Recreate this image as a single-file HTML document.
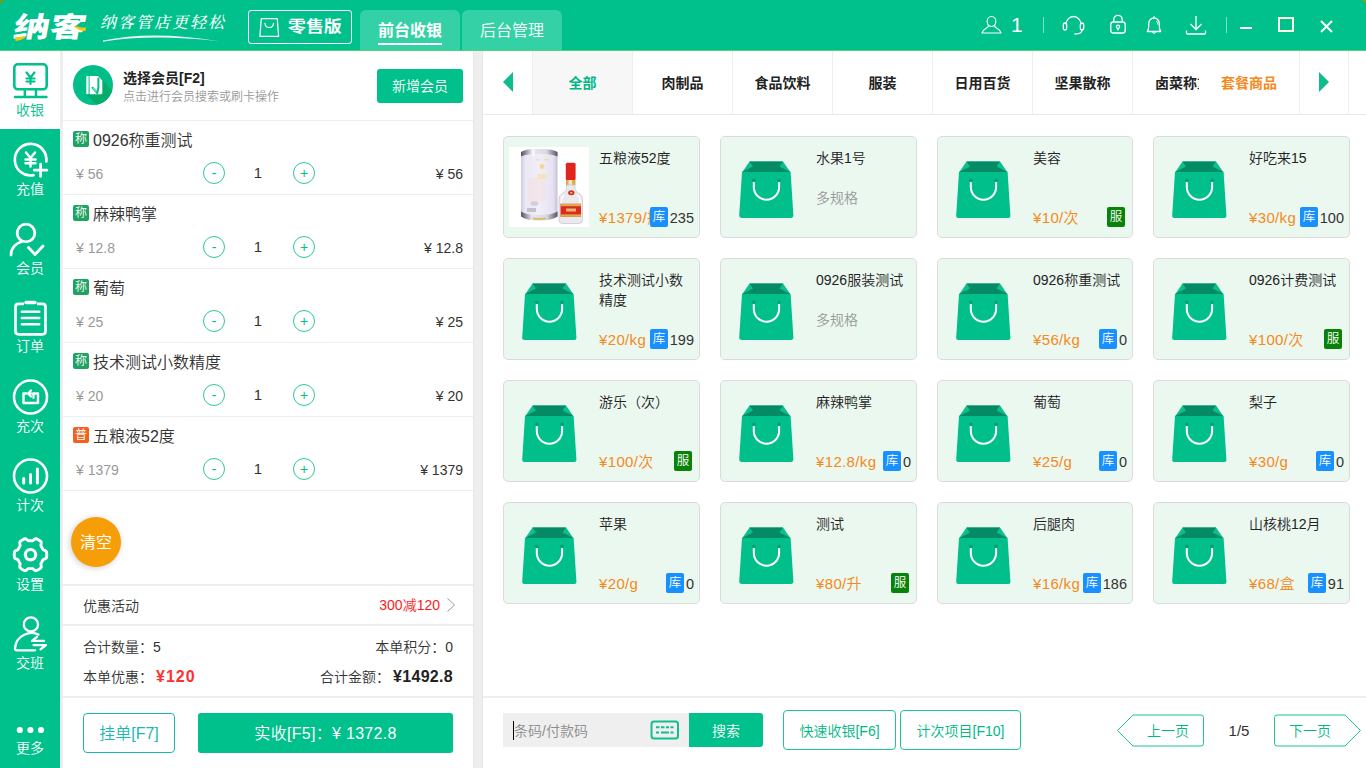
<!DOCTYPE html>
<html lang="zh-CN">
<head>
<meta charset="utf-8">
<title>纳客收银</title>
<style>
*{box-sizing:border-box;margin:0;padding:0}
html,body{width:1366px;height:768px;overflow:hidden;background:#eee}
body{font-family:"Liberation Sans","Noto Sans CJK SC",sans-serif;color:#333;position:relative;font-size:14px;font-weight:350}
.abs{position:absolute}
/* header */
#hdr{position:absolute;left:0;top:0;width:1366px;height:50px;background:#00c08b}
#hline{position:absolute;left:0;top:50px;width:1366px;height:1px;background:#4cd675}
.tab{position:absolute;top:10px;height:40px;width:100px;background:#33d1a5;border-radius:6px 6px 0 0;color:#fff;font-size:16px;text-align:center;line-height:41px}
#edition{position:absolute;left:248px;top:10px;width:104px;height:34px;border:1px solid #fff;border-radius:3px;color:#fff;font-weight:bold;font-size:16px;line-height:31px;padding-left:39px}
/* sidebar */
#side{position:absolute;left:0;top:51px;width:60px;height:717px;background:#00c08b}
.sitem{position:absolute;left:0;width:60px;height:79px;color:#fff;font-size:14px;text-align:center}
.sitem span{position:absolute;left:0;width:60px;top:49px;line-height:18px}
.sitem svg{position:absolute;left:0;top:0}
.sitem.on{background:#fff;color:#00c08b;height:78px}
/* left panel */
#lp{position:absolute;left:63px;top:51px;width:410px;height:717px;background:#fff}
.hl{position:absolute;left:0;width:410px;background:#eee}
.row{position:absolute;left:0;width:410px;height:74px;border-bottom:1px solid #eee}
.bdg{position:absolute;left:10px;top:10px;width:16px;height:16px;border-radius:2px;background:#1fa363;color:#fff;font-size:12px;line-height:16px;text-align:center}
.bdg.p{background:#f4601e}
.nm{position:absolute;left:30px;top:8px;font-size:16px;line-height:24px;color:#333;white-space:nowrap}
.pr{position:absolute;left:13px;top:42px;font-size:14px;line-height:22px;color:#999;white-space:nowrap}
.tt{position:absolute;right:10px;top:42px;font-size:14px;line-height:22px;color:#333;white-space:nowrap}
.cb{position:absolute;top:41px;width:22px;height:22px;border:1px solid #2cc99a;border-radius:50%;color:#00c08b;font-size:14px;line-height:21px;text-align:center}
.qty{position:absolute;left:185px;width:20px;top:41px;font-size:15px;line-height:22px;text-align:center;color:#333}
/* right panel */
#rp{position:absolute;left:483px;top:51px;width:883px;height:717px;background:#fff}
.cat{position:absolute;top:0;height:63px;width:100px;border-left:1px solid #eee;font-size:14px;font-weight:bold;color:#222;text-align:center;line-height:65px;white-space:nowrap;overflow:hidden}
.card{position:absolute;width:197px;height:102px;background:#ebf8ef;border:1px solid #dbdbdb;border-radius:5px}
.card .t{position:absolute;left:95px;top:11px;width:92px;font-size:14px;line-height:20px;color:#222}
.card .p{position:absolute;left:95px;top:71px;font-size:15px;line-height:20px;color:#f5891b;white-space:nowrap;letter-spacing:.35px}
.card .m{position:absolute;left:95px;top:51px;font-size:14px;line-height:20px;color:#999}
.card .k{position:absolute;top:70px;width:18px;height:20px;border-radius:2px;background:#1890ff;color:#fff;font-size:12.500px;line-height:21px;text-align:center}
.card .k.f{background:#088208;left:169px;width:18px}
.card .n{position:absolute;top:71px;font-size:14.500px;line-height:20px;color:#333;white-space:nowrap}
.card svg.bag{position:absolute;left:16.800px;top:23.600px}
.gbtn{position:absolute;border:1px solid #1fc495;border-radius:4px;color:#00b886;font-size:14px;text-align:center;background:#fff;white-space:nowrap}
</style>
</head>
<body>
<div id="hdr">
<div class="abs" id="logo" style="left:14px;top:8px;font-size:28px;line-height:40px;font-weight:900;color:#fff;letter-spacing:0;transform-origin:0 50%;transform:scaleX(1.29) skewX(-8deg);white-space:nowrap">纳客</div>
<svg class="abs" style="left:12px;top:8px" width="80" height="36" viewBox="0 0 80 36"><path d="M3.200 28.800Q8 29.500 13.500 27.800L13 30Q8 33 3.500 32.900Z" fill="#f9c40f"/><path d="M61.800 18Q66 18 69 19.500L73.900 19.500L73.500 23Q67 23.500 61.800 18Z" fill="#f9c40f"/></svg>
<div class="abs" id="slogan" style="left:100px;top:11px;font-size:16px;line-height:24px;color:#fff;font-style:italic;font-weight:500;letter-spacing:2px;white-space:nowrap;font-family:'Liberation Serif','Noto Serif CJK SC',serif">纳客管店更轻松</div>
<svg class="abs" style="left:100px;top:33px" width="125" height="10" viewBox="0 0 125 10"><path d="M3 7.600Q52 -3 119 8.300Q52 .6 3 8.700Z" fill="#fff" opacity=".92"/></svg>
<div id="edition"><span style="display:inline-block;transform-origin:0 50%;transform:scaleX(1.12)">零售版</span></div>
<svg class="abs" style="left:258px;top:15.500px" width="22.500" height="23" viewBox="0 0 24 24" fill="none" stroke="#fff" stroke-width="1.3"><path d="M3.5 2.5h17l1.5 19h-20z" stroke-linejoin="round"/><path d="M7.5 7.5c0 6 9 6 9 0" stroke-linecap="round"/></svg>
<div class="tab" style="left:360px;font-weight:bold">前台收银<i style="position:absolute;left:18px;top:33px;width:64px;height:2px;background:#fff"></i></div>
<div class="tab" style="left:462px">后台管理</div>
<!-- right icons -->
<svg class="abs" style="left:980px;top:14px" width="24" height="22" viewBox="0 0 24 22" fill="none" stroke="#fff" stroke-width="1.2"><ellipse cx="11.5" cy="7.5" rx="4.3" ry="5"/><path d="M8.6 11.5c-.3 3-6.2 3.200-6.600 7.500h19c-.4-4.300-6.300-4.500-6.600-7.500" stroke-linejoin="round"/></svg>
<div class="abs" style="left:1011px;top:12px;font-size:21px;line-height:26px;color:#fff">1</div>
<i class="abs" style="left:1043px;top:17px;width:1px;height:16px;background:#7fe0c4"></i>
<svg class="abs" style="left:1061px;top:13px" width="25" height="24" viewBox="0 0 25 24" fill="none" stroke="#fff" stroke-width="1.3"><path d="M5 11.500a7.500 8 0 0 1 15 0"/><rect x="2.300" y="10" width="3.400" height="7" rx="1.700"/><rect x="19.300" y="10" width="3.400" height="7" rx="1.700"/><path d="M21 17c0 3-3 4-7 4" stroke-linecap="round"/></svg>
<svg class="abs" style="left:1108px;top:13px" width="20" height="22" viewBox="0 0 20 22" fill="none" stroke="#fff" stroke-width="1.3"><rect x="2.800" y="9" width="14.400" height="11" rx="2.500"/><path d="M5.800 9v-2.500a4.200 4.200 0 0 1 8.400 0v2.500"/><circle cx="10" cy="13.800" r="1.600"/><path d="M10 15.400v2"/></svg>
<svg class="abs" style="left:1143px;top:13px" width="22" height="24" viewBox="0 0 22 24" fill="none" stroke="#fff" stroke-width="1.300"><path d="M4.300 18.500c1.200-1.500 1.500-3 1.500-8.300a5.200 5.200 0 0 1 10.400 0c0 5.300 .3 6.800 1.500 8.300z" stroke-linejoin="round"/><path d="M9.300 19a1.800 1.800 0 0 0 3.400 0M11 3v2M13.500 8q1.200 1.500 1.200 3.500" stroke-width="1"/></svg>
<svg class="abs" style="left:1185px;top:14px" width="22" height="22" viewBox="0 0 22 22" fill="none" stroke="#fff" stroke-width="1.300"><path d="M11 2v13M5.500 10l5.500 5.500 5.500-5.500" /><path d="M1.500 16.500v2.500q0 1 1 1h17q1 0 1-1v-2.500"/></svg>
<i class="abs" style="left:1226px;top:17px;width:1px;height:16px;background:#7fe0c4"></i>
<i class="abs" style="left:1240px;top:27px;width:12px;height:2px;background:#fff"></i>
<i class="abs" style="left:1278px;top:17px;width:16px;height:15px;border:2px solid #ffffe6"></i>
<svg class="abs" style="left:1319px;top:19px" width="15" height="15" viewBox="0 0 15 15" stroke="#fff" stroke-width="2"><path d="M2 2l11 11M13 2l-11 11"/></svg>
</div>
<div id="hline"></div><svg class="abs" style="left:0;top:0;z-index:5" width="4" height="4" viewBox="0 0 4 4"><path d="M0 0h4v1h-2v1h-1v2h-1z" fill="#7a9a00"/></svg><svg class="abs" style="left:1362px;top:0;z-index:5" width="4" height="4" viewBox="0 0 4 4"><path d="M0 0h4v4h-1v-2h-1v-1h-2z" fill="#86a010"/></svg>
<i class="abs" style="left:473px;top:51px;width:1px;height:717px;background:#e6e6e6"></i><i class="abs" style="left:482px;top:51px;width:1px;height:717px;background:#e6e6e6"></i>
<div id="side">
<div class="sitem on" style="top:0"><svg width="60" height="50" viewBox="0 0 60 50" fill="none" stroke="#00c08b" stroke-width="2.600"><rect x="14.300" y="13.300" width="32.400" height="25" rx="3.500"/><path d="M24.800 38.500v7M36 38.500v7" stroke-width="2.400"/><path d="M15 46h31.500" stroke-width="2.400" stroke-linecap="round"/><path d="M26.500 21.500l4 5 4-5M30.500 26.500v6.500M26.500 27.500h8M26.500 30.500h8" stroke-width="2.200" stroke-linecap="round" stroke-linejoin="round"/></svg><span style="top:50px">收银</span></div>
<div class="sitem" style="top:79px"><svg width="60" height="50" viewBox="0 0 60 50" fill="none" stroke="#fff" stroke-width="2.700"><path d="M46.300 31.500A15.800 15.800 0 1 0 33.500 45.200" stroke-linecap="round"/><path d="M40.600 34v12.500M34.300 40.200h12.600" stroke-linecap="round"/><path d="M26 22.500l4.500 5.500 4.500-5.500M30.500 28v8.500M25.500 29.500h10M25.500 33.200h10" stroke-width="2.500" stroke-linecap="round" stroke-linejoin="round"/></svg><span style="top:50px">充值</span></div>
<div class="sitem" style="top:158px"><svg width="60" height="50" viewBox="0 0 60 50" fill="none" stroke="#fff" stroke-width="2.800"><circle cx="26" cy="24" r="8.800"/><path d="M11 46c0-7 5-12 11-13.500" stroke-linecap="round"/><path d="M28.500 38.500l6.500 7 8-8.500" stroke-linecap="round" stroke-linejoin="round"/></svg><span style="top:50px">会员</span></div>
<div class="sitem" style="top:237px"><svg width="60" height="50" viewBox="0 0 60 50" fill="none" stroke="#fff" stroke-width="2.700"><path d="M24 15.800h-5.500q-3 0-3 3v24.500q0 3 3 3h24q3 0 3-3v-24.500q0-3-3-3h-5.500"/><path d="M26 14.500h9" stroke-width="3.400" stroke-linecap="round"/><path d="M21.800 23.800h17.500M21.800 30h17.500M21.800 36.300h17.500" stroke-width="2.400" stroke-linecap="round"/></svg><span style="top:49px">订单</span></div>
<div class="sitem" style="top:316px"><svg style="top:1px" width="60" height="50" viewBox="0 0 60 50" fill="none" stroke="#fff" stroke-width="2.600"><circle cx="30.500" cy="29" r="16.500"/><path d="M27 25.500h-3.500v9.500h14.500v-9.500h-4.500" stroke-linejoin="round" stroke-width="2.400"/><path d="M33.500 30v-4.500h-5M31 22.500l-3 3 3 3" stroke-width="2.200" stroke-linejoin="round" stroke-linecap="round"/></svg><span style="top:50px">充次</span></div>
<div class="sitem" style="top:395px"><svg style="top:1px" width="60" height="50" viewBox="0 0 60 50" fill="none" stroke="#fff" stroke-width="2.600"><circle cx="30.500" cy="29" r="16.500"/><path d="M23.700 36v-4.500M30.500 36v-8.500M37.400 36v-14" stroke-width="3" stroke-linecap="round"/></svg><span style="top:50px">计次</span></div>
<div class="sitem" style="top:474px"><svg width="60" height="50" viewBox="0 0 60 50" fill="none" stroke="#fff" stroke-width="2.900"><circle cx="30.500" cy="29.700" r="5.200" stroke-width="3.200"/><path d="M46.75 29.70 L46.74 30.30 L46.71 30.89 L46.66 31.48 L46.59 32.07 L46.49 32.66 L46.13 33.19 L45.49 33.62 L44.69 33.97 L43.90 34.27 L43.27 34.58 L42.86 34.94 L42.65 35.38 L42.45 35.82 L42.24 36.26 L42.02 36.68 L41.78 37.10 L41.53 37.51 L41.26 37.91 L41.01 38.32 L40.91 38.87 L40.97 39.60 L41.12 40.47 L41.23 41.37 L41.20 42.17 L40.94 42.76 L40.50 43.15 L40.05 43.50 L39.59 43.85 L39.11 44.17 L38.62 44.48 L38.13 44.77 L37.62 45.04 L37.11 45.29 L36.59 45.52 L36.05 45.72 L35.44 45.66 L34.76 45.29 L34.07 44.74 L33.43 44.17 L32.86 43.75 L32.36 43.56 L31.89 43.59 L31.43 43.63 L30.96 43.66 L30.50 43.66 L30.04 43.66 L29.57 43.63 L29.11 43.59 L28.64 43.56 L28.14 43.75 L27.57 44.17 L26.93 44.74 L26.24 45.29 L25.56 45.66 L24.95 45.72 L24.41 45.52 L23.89 45.29 L23.38 45.04 L22.87 44.77 L22.38 44.48 L21.89 44.17 L21.41 43.85 L20.95 43.50 L20.50 43.15 L20.06 42.76 L19.80 42.17 L19.77 41.37 L19.88 40.47 L20.03 39.60 L20.09 38.87 L19.99 38.32 L19.74 37.91 L19.47 37.51 L19.22 37.10 L18.98 36.68 L18.76 36.26 L18.55 35.82 L18.35 35.38 L18.14 34.94 L17.73 34.58 L17.10 34.27 L16.31 33.97 L15.51 33.62 L14.87 33.19 L14.51 32.66 L14.41 32.07 L14.34 31.48 L14.29 30.89 L14.26 30.30 L14.25 29.70 L14.26 29.10 L14.29 28.51 L14.34 27.92 L14.41 27.33 L14.51 26.74 L14.87 26.21 L15.51 25.78 L16.31 25.43 L17.10 25.13 L17.73 24.82 L18.14 24.46 L18.35 24.02 L18.55 23.58 L18.76 23.14 L18.98 22.72 L19.22 22.30 L19.47 21.89 L19.74 21.49 L19.99 21.08 L20.09 20.53 L20.03 19.80 L19.88 18.93 L19.77 18.03 L19.80 17.23 L20.06 16.64 L20.50 16.25 L20.95 15.90 L21.41 15.55 L21.89 15.23 L22.37 14.92 L22.87 14.63 L23.38 14.36 L23.89 14.11 L24.41 13.88 L24.95 13.68 L25.56 13.74 L26.24 14.11 L26.93 14.66 L27.57 15.23 L28.14 15.65 L28.64 15.84 L29.11 15.81 L29.57 15.77 L30.04 15.74 L30.50 15.73 L30.96 15.74 L31.43 15.77 L31.89 15.81 L32.36 15.84 L32.86 15.65 L33.43 15.23 L34.07 14.66 L34.76 14.11 L35.44 13.74 L36.05 13.68 L36.59 13.88 L37.11 14.11 L37.62 14.36 L38.13 14.63 L38.62 14.92 L39.11 15.23 L39.59 15.55 L40.05 15.90 L40.50 16.25 L40.94 16.64 L41.20 17.23 L41.23 18.03 L41.12 18.93 L40.97 19.80 L40.91 20.53 L41.01 21.08 L41.26 21.49 L41.53 21.89 L41.78 22.30 L42.02 22.72 L42.24 23.14 L42.45 23.58 L42.65 24.02 L42.86 24.46 L43.27 24.82 L43.90 25.13 L44.69 25.43 L45.49 25.78 L46.13 26.21 L46.49 26.74 L46.59 27.33 L46.66 27.92 L46.71 28.51 L46.74 29.10Z" stroke-linejoin="round"/></svg><span style="top:50px">设置</span></div>
<div class="sitem" style="top:553px"><svg width="60" height="50" viewBox="0 0 60 50" fill="none" stroke="#fff" stroke-width="2.300"><circle cx="30.900" cy="20.400" r="7.100"/><path d="M38.500 30.600C31 26.800 16 30 15 44.500Q15 46.300 17 46.300H35.200" stroke-linecap="round"/><path d="M44 36.900H32L37 32.800M33.500 41.100H46L40.500 45.300" stroke-linecap="round" stroke-linejoin="round"/></svg><span style="top:50px">交班</span></div>
<div class="sitem" style="top:640px"><svg width="60" height="50" viewBox="0 0 60 50" fill="#fff"><circle cx="19.800" cy="39" r="3.100"/><circle cx="30.400" cy="39" r="3.100"/><circle cx="41" cy="39" r="3.100"/></svg><span style="top:48px">更多</span></div>
</div>
<div id="lp">
<div class="abs" style="left:10px;top:14px;width:40px;height:40px;border-radius:50%;background:#00be88;overflow:hidden"><svg width="40" height="40" viewBox="0 0 40 40"><path d="M25 11L46 32V46H30L13.500 29.300z" fill="#04ad6a"/><path d="M14.300 11h1.300v18.300h-1.300q-1 0-1-1v-16.300q0-1 1-1zM16.600 11h8.400l4.300 4.500v12.800q0 1-1 1h-11.700z" fill="#fff"/><path d="M19.500 22.800l4.800 5.200 1.100-5v-9.500" fill="none" stroke="#00be88" stroke-width="2" stroke-linecap="round" stroke-linejoin="round"/><path d="M20 23.200l3 3.400" fill="none" stroke="#fff" stroke-width=".7" stroke-linecap="round"/></svg></div>
<div class="abs" style="left:60px;top:17px;font-size:14px;line-height:20px;font-weight:bold;color:#222;white-space:nowrap">选择会员[F2]</div>
<div class="abs" style="left:60px;top:37px;font-size:12px;line-height:18px;color:#999;white-space:nowrap">点击进行会员搜索或刷卡操作</div>
<div class="abs" style="left:314px;top:18px;width:86px;height:34px;border-radius:3px;background:#00c08b;color:#fff;font-size:14px;line-height:35px;text-align:center">新增会员</div>
<div class="hl" style="top:69px;height:1px"></div>
<div class="row" style="top:70px"><div class="bdg ">称</div><div class="nm">0926称重测试</div><div class="pr">¥ 56</div><div class="cb" style="left:140px">-</div><div class="qty">1</div><div class="cb" style="left:230px">+</div><div class="tt">¥ 56</div></div>
<div class="row" style="top:144px"><div class="bdg ">称</div><div class="nm">麻辣鸭掌</div><div class="pr">¥ 12.8</div><div class="cb" style="left:140px">-</div><div class="qty">1</div><div class="cb" style="left:230px">+</div><div class="tt">¥ 12.8</div></div>
<div class="row" style="top:218px"><div class="bdg ">称</div><div class="nm">葡萄</div><div class="pr">¥ 25</div><div class="cb" style="left:140px">-</div><div class="qty">1</div><div class="cb" style="left:230px">+</div><div class="tt">¥ 25</div></div>
<div class="row" style="top:292px"><div class="bdg ">称</div><div class="nm">技术测试小数精度</div><div class="pr">¥ 20</div><div class="cb" style="left:140px">-</div><div class="qty">1</div><div class="cb" style="left:230px">+</div><div class="tt">¥ 20</div></div>
<div class="row" style="top:366px"><div class="bdg p">普</div><div class="nm">五粮液52度</div><div class="pr">¥ 1379</div><div class="cb" style="left:140px">-</div><div class="qty">1</div><div class="cb" style="left:230px">+</div><div class="tt">¥ 1379</div></div>
<div class="abs" style="left:8px;top:466px;width:50px;height:50px;border-radius:50%;background:#f59e07;color:#fff;font-size:16px;font-weight:400;line-height:52px;text-align:center;box-shadow:-1px 1px 6px rgba(0,0,0,.2)">清空</div>
<div class="hl" style="top:533px;height:2px"></div>
<div class="abs" style="left:20px;top:545px;font-size:14px;line-height:20px;color:#333">优惠活动</div>
<div class="abs" style="right:33px;top:544px;font-size:14px;line-height:20px;color:#ff1a1a;white-space:nowrap">300减120</div>
<svg class="abs" style="left:382px;top:546px" width="12" height="16" viewBox="0 0 12 16" fill="none" stroke="#999" stroke-width="1"><path d="M2.500 1.500l7 6.500-7 6.500"/></svg>
<div class="hl" style="top:573px;height:2px"></div>
<div class="abs" style="left:20px;top:586px;font-size:14px;line-height:20px;color:#333;white-space:nowrap">合计数量：5</div>
<div class="abs" style="right:20px;top:586px;font-size:14px;line-height:20px;color:#333;white-space:nowrap">本单积分：0</div>
<div class="abs" style="left:20px;top:616px;font-size:14px;line-height:20px;color:#333;white-space:nowrap">本单优惠：<b style="color:#ff3030;font-size:16px;letter-spacing:1px;margin-left:3px">¥120</b></div>
<div class="abs" style="right:20px;top:616px;font-size:14px;line-height:20px;color:#333;white-space:nowrap">合计金额：<b style="color:#222;font-size:16px;letter-spacing:.3px;margin-left:3px">¥1492.8</b></div>
<div class="hl" style="top:645px;height:2px"></div>
<div class="abs" style="left:20px;top:662px;width:92px;height:40px;border:1px solid #1ab8b0;border-radius:4px;color:#1ab8b0;font-size:16px;line-height:39px;text-align:center;white-space:nowrap">挂单[F7]</div>
<div class="abs" style="left:135px;top:662px;width:255px;height:40px;border-radius:3px;background:#00c08b;color:#fff;font-size:16px;letter-spacing:.3px;line-height:41px;text-align:center;white-space:nowrap">实收[F5]：¥ 1372.8</div>
</div>
<div id="rp">
<svg class="abs" style="left:20px;top:21px" width="10" height="20" viewBox="0 0 10 20"><path d="M10 0v20l-10-10z" fill="#0fbd8c"/></svg>
<div class="cat" style="left:49px;width:100px;color:#00b886;background:#f7f7f7">全部</div><div class="cat" style="left:149px;width:100px;">肉制品</div><div class="cat" style="left:249px;width:100px;">食品饮料</div><div class="cat" style="left:349px;width:100px;">服装</div><div class="cat" style="left:449px;width:100px;">日用百货</div><div class="cat" style="left:549px;width:100px;">坚果散称</div><div class="cat" style="left:649px;width:100px;width:67px;text-align:left;padding-left:22px;">卤菜称重</div>
<div class="cat" style="left:716px;width:100px;border-left:none;background:#fff;color:#f5891b">套餐商品</div>
<div class="cat" style="left:816px;width:50px;border-right:1px solid #eee"></div>
<svg class="abs" style="left:836px;top:21px" width="10" height="20" viewBox="0 0 10 20"><path d="M0 0v20l10-10z" fill="#0fbd8c"/></svg>
<div class="hl" style="left:0;top:63px;width:883px;height:1px;background:#eaeaea"></div>
<div class="card" style="left:20px;top:85px;width:197px"><div class="abs" style="left:5px;top:10px;width:80px;height:80px;background:#fff;overflow:hidden"><svg width="80" height="80" viewBox="0 0 80 80"><defs><linearGradient id="bx" x1="0" x2="1"><stop offset="0" stop-color="#cfcae0"/><stop offset=".12" stop-color="#ebe7f5"/><stop offset=".5" stop-color="#f1eef8"/><stop offset=".88" stop-color="#e6e2f1"/><stop offset="1" stop-color="#c5c0d8"/></linearGradient><linearGradient id="sv" x1="0" x2="1"><stop offset="0" stop-color="#55525e"/><stop offset=".12" stop-color="#8f8c99"/><stop offset=".3" stop-color="#e8e6ee"/><stop offset=".7" stop-color="#d9d7df"/><stop offset=".88" stop-color="#8f8c99"/><stop offset="1" stop-color="#55525e"/></linearGradient></defs>
<path d="M12 5q5-3.500 18-3 13-.5 18.500 3v64q-5 4.500-18.500 4.500-13 0-18-4.500z" fill="url(#bx)"/>
<path d="M12 5q5-3.500 18-3 13-.5 18.500 3v4.500q-5.500-3-18.500-2.500-13-.5-18 2.500z" fill="url(#sv)"/>
<path d="M12 64.500q5 3.500 18 3.500 13 0 18.500-3.500v5q-5.500 4-18.500 4-13 0-18-4z" fill="url(#sv)"/>
<path d="M24 71.500q6 .8 13 0" stroke="#d8bf6a" stroke-width="2" fill="none"/>
<rect x="23.300" y="2.300" width="2.200" height="7" fill="#fff" opacity=".8"/>
<circle cx="33" cy="19.500" r="2.400" fill="#f0d98c"/><rect x="27" y="12.300" width="4" height="1" fill="#ecd9a0"/><rect x="35" y="12.300" width="5" height="1" fill="#ecd9a0"/>
<rect x="28" y="27" width="10" height="5" fill="#f4e2b0" opacity=".8"/>
<rect x="19" y="31" width="17" height="24" fill="#f8dcd6" opacity=".4"/>
<ellipse cx="25.500" cy="56.500" rx="4" ry="2.300" fill="#c9c9cf" opacity=".8"/>
<rect x="18" y="61" width="9" height="4" fill="#b9b6c2" opacity=".8"/>
<rect x="56.800" y="15.800" width="9.800" height="17.400" rx="1.500" fill="#e0261c"/>
<rect x="57" y="33" width="9.500" height="5" fill="#d9ad4c"/><rect x="59.500" y="33" width="3.500" height="5" fill="#f3e7c0"/>
<path d="M57.500 38h8.500v4q.5 3 5 5 2.500 1.500 2.500 5v21q0 3.500-3.500 3.500h-16.500q-3.500 0-3.500-3.500v-21q0-3.500 2.500-5 4.500-2 5-5z" fill="#ebe9f0" stroke="#c5c2cd" stroke-width=".7"/>
<path d="M55 48q-2.500 2-2.500 5v3.500M68.500 48q2.500 2 2.500 5v3.500" stroke="#fff" stroke-width="1.500" fill="none"/>
<ellipse cx="62.300" cy="45.800" rx="3.200" ry="2.500" fill="#c9321f"/><ellipse cx="62.300" cy="45.800" rx="1.300" ry="1" fill="#e7b85a"/>
<rect x="51.500" y="56.800" width="20.500" height="13" fill="#dd2a1e"/><rect x="51.500" y="56.800" width="20.500" height="2.400" fill="#d9ae4a"/><rect x="51.500" y="67.400" width="20.500" height="2.400" fill="#d9ae4a"/><rect x="57" y="61.500" width="10" height="3" fill="#f0cf86" opacity=".85"/>
</svg></div><div class="t">五粮液52度</div><div class="p">¥1379/瓶</div><div class="k" style="right:31.0px">库</div><div class="n" style="right:5px">235</div></div>
<div class="card" style="left:237px;top:85px;width:197px"><svg class="bag" width="56" height="58" viewBox="0 0 56 58"><path d="M11.500 .500h33.500l7.600 11h-48.600z" fill="#0bc08c"/><path d="M11.500 .500h33.500l-3.500 5 11 5.500h-48.500l11-5.500z" fill="#058a66"/><path d="M4 11h48.600l2.800 43.500q.2 2.500-2.300 2.500h-49.600q-2.500 0-2.300-2.500z" fill="#00bf8b"/><path d="M15.800 20v6a12.650 12.650 0 0 0 25.300 0v-6" fill="none" stroke="#fff" stroke-width="2" stroke-linecap="round"/><circle cx="15.800" cy="19.300" r="1.900" fill="#06a078"/><circle cx="41.100" cy="19.300" r="1.900" fill="#06a078"/></svg><div class="t">水果1号</div><div class="m">多规格</div></div>
<div class="card" style="left:454px;top:85px;width:196px"><svg class="bag" width="56" height="58" viewBox="0 0 56 58"><path d="M11.500 .500h33.500l7.600 11h-48.600z" fill="#0bc08c"/><path d="M11.500 .500h33.500l-3.500 5 11 5.500h-48.500l11-5.500z" fill="#058a66"/><path d="M4 11h48.600l2.800 43.500q.2 2.500-2.300 2.500h-49.600q-2.500 0-2.300-2.500z" fill="#00bf8b"/><path d="M15.800 20v6a12.650 12.650 0 0 0 25.300 0v-6" fill="none" stroke="#fff" stroke-width="2" stroke-linecap="round"/><circle cx="15.800" cy="19.300" r="1.900" fill="#06a078"/><circle cx="41.100" cy="19.300" r="1.900" fill="#06a078"/></svg><div class="t">美容</div><div class="p">¥10/次</div><div class="k f" style="left:169px">服</div></div>
<div class="card" style="left:670px;top:85px;width:197px"><svg class="bag" width="56" height="58" viewBox="0 0 56 58"><path d="M11.500 .500h33.500l7.600 11h-48.600z" fill="#0bc08c"/><path d="M11.500 .500h33.500l-3.500 5 11 5.500h-48.500l11-5.500z" fill="#058a66"/><path d="M4 11h48.600l2.800 43.500q.2 2.500-2.300 2.500h-49.600q-2.500 0-2.300-2.500z" fill="#00bf8b"/><path d="M15.800 20v6a12.650 12.650 0 0 0 25.300 0v-6" fill="none" stroke="#fff" stroke-width="2" stroke-linecap="round"/><circle cx="15.800" cy="19.300" r="1.900" fill="#06a078"/><circle cx="41.100" cy="19.300" r="1.900" fill="#06a078"/></svg><div class="t">好吃来15</div><div class="p">¥30/kg</div><div class="k" style="right:31.0px">库</div><div class="n" style="right:5px">100</div></div>
<div class="card" style="left:20px;top:207px;width:197px"><svg class="bag" width="56" height="58" viewBox="0 0 56 58"><path d="M11.500 .500h33.500l7.600 11h-48.600z" fill="#0bc08c"/><path d="M11.500 .500h33.500l-3.500 5 11 5.500h-48.500l11-5.500z" fill="#058a66"/><path d="M4 11h48.600l2.800 43.500q.2 2.500-2.300 2.500h-49.600q-2.500 0-2.300-2.500z" fill="#00bf8b"/><path d="M15.800 20v6a12.650 12.650 0 0 0 25.300 0v-6" fill="none" stroke="#fff" stroke-width="2" stroke-linecap="round"/><circle cx="15.800" cy="19.300" r="1.900" fill="#06a078"/><circle cx="41.100" cy="19.300" r="1.900" fill="#06a078"/></svg><div class="t">技术测试小数精度</div><div class="p">¥20/kg</div><div class="k" style="right:31.0px">库</div><div class="n" style="right:5px">199</div></div>
<div class="card" style="left:237px;top:207px;width:197px"><svg class="bag" width="56" height="58" viewBox="0 0 56 58"><path d="M11.500 .500h33.500l7.600 11h-48.600z" fill="#0bc08c"/><path d="M11.500 .500h33.500l-3.500 5 11 5.500h-48.500l11-5.500z" fill="#058a66"/><path d="M4 11h48.600l2.800 43.500q.2 2.500-2.300 2.500h-49.600q-2.500 0-2.300-2.500z" fill="#00bf8b"/><path d="M15.800 20v6a12.650 12.650 0 0 0 25.300 0v-6" fill="none" stroke="#fff" stroke-width="2" stroke-linecap="round"/><circle cx="15.800" cy="19.300" r="1.900" fill="#06a078"/><circle cx="41.100" cy="19.300" r="1.900" fill="#06a078"/></svg><div class="t">0926服装测试</div><div class="m">多规格</div></div>
<div class="card" style="left:454px;top:207px;width:196px"><svg class="bag" width="56" height="58" viewBox="0 0 56 58"><path d="M11.500 .500h33.500l7.600 11h-48.600z" fill="#0bc08c"/><path d="M11.500 .500h33.500l-3.500 5 11 5.500h-48.500l11-5.500z" fill="#058a66"/><path d="M4 11h48.600l2.800 43.500q.2 2.500-2.300 2.500h-49.600q-2.500 0-2.300-2.500z" fill="#00bf8b"/><path d="M15.800 20v6a12.650 12.650 0 0 0 25.300 0v-6" fill="none" stroke="#fff" stroke-width="2" stroke-linecap="round"/><circle cx="15.800" cy="19.300" r="1.900" fill="#06a078"/><circle cx="41.100" cy="19.300" r="1.900" fill="#06a078"/></svg><div class="t">0926称重测试</div><div class="p">¥56/kg</div><div class="k" style="right:14.9px">库</div><div class="n" style="right:5px">0</div></div>
<div class="card" style="left:670px;top:207px;width:197px"><svg class="bag" width="56" height="58" viewBox="0 0 56 58"><path d="M11.500 .500h33.500l7.600 11h-48.600z" fill="#0bc08c"/><path d="M11.500 .500h33.500l-3.500 5 11 5.500h-48.500l11-5.500z" fill="#058a66"/><path d="M4 11h48.600l2.800 43.500q.2 2.500-2.300 2.500h-49.600q-2.500 0-2.300-2.500z" fill="#00bf8b"/><path d="M15.800 20v6a12.650 12.650 0 0 0 25.300 0v-6" fill="none" stroke="#fff" stroke-width="2" stroke-linecap="round"/><circle cx="15.800" cy="19.300" r="1.900" fill="#06a078"/><circle cx="41.100" cy="19.300" r="1.900" fill="#06a078"/></svg><div class="t">0926计费测试</div><div class="p">¥100/次</div><div class="k f" style="left:170px">服</div></div>
<div class="card" style="left:20px;top:329px;width:197px"><svg class="bag" width="56" height="58" viewBox="0 0 56 58"><path d="M11.500 .500h33.500l7.600 11h-48.600z" fill="#0bc08c"/><path d="M11.500 .500h33.500l-3.500 5 11 5.500h-48.500l11-5.500z" fill="#058a66"/><path d="M4 11h48.600l2.800 43.500q.2 2.500-2.300 2.500h-49.600q-2.500 0-2.300-2.500z" fill="#00bf8b"/><path d="M15.800 20v6a12.650 12.650 0 0 0 25.300 0v-6" fill="none" stroke="#fff" stroke-width="2" stroke-linecap="round"/><circle cx="15.800" cy="19.300" r="1.900" fill="#06a078"/><circle cx="41.100" cy="19.300" r="1.900" fill="#06a078"/></svg><div class="t">游乐（次）</div><div class="p">¥100/次</div><div class="k f" style="left:170px">服</div></div>
<div class="card" style="left:237px;top:329px;width:197px"><svg class="bag" width="56" height="58" viewBox="0 0 56 58"><path d="M11.500 .500h33.500l7.600 11h-48.600z" fill="#0bc08c"/><path d="M11.500 .500h33.500l-3.500 5 11 5.500h-48.500l11-5.500z" fill="#058a66"/><path d="M4 11h48.600l2.800 43.500q.2 2.500-2.300 2.500h-49.600q-2.500 0-2.300-2.500z" fill="#00bf8b"/><path d="M15.800 20v6a12.650 12.650 0 0 0 25.300 0v-6" fill="none" stroke="#fff" stroke-width="2" stroke-linecap="round"/><circle cx="15.800" cy="19.300" r="1.900" fill="#06a078"/><circle cx="41.100" cy="19.300" r="1.900" fill="#06a078"/></svg><div class="t">麻辣鸭掌</div><div class="p">¥12.8/kg</div><div class="k" style="right:14.9px">库</div><div class="n" style="right:5px">0</div></div>
<div class="card" style="left:454px;top:329px;width:196px"><svg class="bag" width="56" height="58" viewBox="0 0 56 58"><path d="M11.500 .500h33.500l7.600 11h-48.600z" fill="#0bc08c"/><path d="M11.500 .500h33.500l-3.500 5 11 5.500h-48.500l11-5.500z" fill="#058a66"/><path d="M4 11h48.600l2.800 43.500q.2 2.500-2.300 2.500h-49.600q-2.500 0-2.300-2.500z" fill="#00bf8b"/><path d="M15.800 20v6a12.650 12.650 0 0 0 25.300 0v-6" fill="none" stroke="#fff" stroke-width="2" stroke-linecap="round"/><circle cx="15.800" cy="19.300" r="1.900" fill="#06a078"/><circle cx="41.100" cy="19.300" r="1.900" fill="#06a078"/></svg><div class="t">葡萄</div><div class="p">¥25/g</div><div class="k" style="right:14.9px">库</div><div class="n" style="right:5px">0</div></div>
<div class="card" style="left:670px;top:329px;width:197px"><svg class="bag" width="56" height="58" viewBox="0 0 56 58"><path d="M11.500 .500h33.500l7.600 11h-48.600z" fill="#0bc08c"/><path d="M11.500 .500h33.500l-3.500 5 11 5.500h-48.500l11-5.500z" fill="#058a66"/><path d="M4 11h48.600l2.800 43.500q.2 2.500-2.300 2.500h-49.600q-2.500 0-2.300-2.500z" fill="#00bf8b"/><path d="M15.800 20v6a12.650 12.650 0 0 0 25.300 0v-6" fill="none" stroke="#fff" stroke-width="2" stroke-linecap="round"/><circle cx="15.800" cy="19.300" r="1.900" fill="#06a078"/><circle cx="41.100" cy="19.300" r="1.900" fill="#06a078"/></svg><div class="t">梨子</div><div class="p">¥30/g</div><div class="k" style="right:14.9px">库</div><div class="n" style="right:5px">0</div></div>
<div class="card" style="left:20px;top:451px;width:197px"><svg class="bag" width="56" height="58" viewBox="0 0 56 58"><path d="M11.500 .500h33.500l7.600 11h-48.600z" fill="#0bc08c"/><path d="M11.500 .500h33.500l-3.500 5 11 5.500h-48.500l11-5.500z" fill="#058a66"/><path d="M4 11h48.600l2.800 43.500q.2 2.500-2.300 2.500h-49.600q-2.500 0-2.300-2.500z" fill="#00bf8b"/><path d="M15.800 20v6a12.650 12.650 0 0 0 25.300 0v-6" fill="none" stroke="#fff" stroke-width="2" stroke-linecap="round"/><circle cx="15.800" cy="19.300" r="1.900" fill="#06a078"/><circle cx="41.100" cy="19.300" r="1.900" fill="#06a078"/></svg><div class="t">苹果</div><div class="p">¥20/g</div><div class="k" style="right:14.9px">库</div><div class="n" style="right:5px">0</div></div>
<div class="card" style="left:237px;top:451px;width:197px"><svg class="bag" width="56" height="58" viewBox="0 0 56 58"><path d="M11.500 .500h33.500l7.600 11h-48.600z" fill="#0bc08c"/><path d="M11.500 .500h33.500l-3.500 5 11 5.500h-48.500l11-5.500z" fill="#058a66"/><path d="M4 11h48.600l2.800 43.500q.2 2.500-2.300 2.500h-49.600q-2.500 0-2.300-2.500z" fill="#00bf8b"/><path d="M15.800 20v6a12.650 12.650 0 0 0 25.300 0v-6" fill="none" stroke="#fff" stroke-width="2" stroke-linecap="round"/><circle cx="15.800" cy="19.300" r="1.900" fill="#06a078"/><circle cx="41.100" cy="19.300" r="1.900" fill="#06a078"/></svg><div class="t">测试</div><div class="p">¥80/升</div><div class="k f" style="left:170px">服</div></div>
<div class="card" style="left:454px;top:451px;width:196px"><svg class="bag" width="56" height="58" viewBox="0 0 56 58"><path d="M11.500 .500h33.500l7.600 11h-48.600z" fill="#0bc08c"/><path d="M11.500 .500h33.500l-3.500 5 11 5.500h-48.500l11-5.500z" fill="#058a66"/><path d="M4 11h48.600l2.800 43.500q.2 2.500-2.300 2.500h-49.600q-2.500 0-2.300-2.500z" fill="#00bf8b"/><path d="M15.800 20v6a12.650 12.650 0 0 0 25.300 0v-6" fill="none" stroke="#fff" stroke-width="2" stroke-linecap="round"/><circle cx="15.800" cy="19.300" r="1.900" fill="#06a078"/><circle cx="41.100" cy="19.300" r="1.900" fill="#06a078"/></svg><div class="t">后腿肉</div><div class="p">¥16/kg</div><div class="k" style="right:31.0px">库</div><div class="n" style="right:5px">186</div></div>
<div class="card" style="left:670px;top:451px;width:197px"><svg class="bag" width="56" height="58" viewBox="0 0 56 58"><path d="M11.500 .500h33.500l7.600 11h-48.600z" fill="#0bc08c"/><path d="M11.500 .500h33.500l-3.500 5 11 5.500h-48.500l11-5.500z" fill="#058a66"/><path d="M4 11h48.600l2.800 43.500q.2 2.500-2.300 2.500h-49.600q-2.500 0-2.300-2.500z" fill="#00bf8b"/><path d="M15.800 20v6a12.650 12.650 0 0 0 25.300 0v-6" fill="none" stroke="#fff" stroke-width="2" stroke-linecap="round"/><circle cx="15.800" cy="19.300" r="1.900" fill="#06a078"/><circle cx="41.100" cy="19.300" r="1.900" fill="#06a078"/></svg><div class="t">山核桃12月</div><div class="p">¥68/盒</div><div class="k" style="right:22.9px">库</div><div class="n" style="right:5px">91</div></div>

<div class="hl" style="left:0;top:645px;width:883px;height:2px"></div>
<div class="abs" style="left:20px;top:662px;width:186px;height:34px;background:#efefef;color:#8c8c8c;font-size:14px;line-height:36px;padding-left:11px;white-space:nowrap">条码/付款码<i class="abs" style="left:10px;top:8px;width:1px;height:19px;background:#000"></i></div>
<svg class="abs" style="left:167px;top:669px" width="30" height="20" viewBox="0 0 30 20" fill="none" stroke="#10bf8e" stroke-width="2"><rect x="1.500" y="1.500" width="26.500" height="17" rx="2.500"/><path d="M6 7.300h3.500M11 7.300h3.500M16 7.300h3M20.500 7.300h3M6 12.500h3M11 12.500h8M20.500 12.500h3" stroke-width="2"/></svg>
<div class="abs" style="left:206px;top:662px;width:74px;height:34px;background:#00c08b;color:#fff;font-size:14px;line-height:36px;text-align:center;border-radius:0 3px 3px 0">搜索</div>
<div class="gbtn" style="left:300px;top:659px;width:113px;height:40px;line-height:40px">快速收银[F6]</div>
<div class="gbtn" style="left:417px;top:659px;width:121px;height:40px;line-height:40px">计次项目[F10]</div>
<svg class="abs" style="left:633px;top:663px" width="89" height="34" viewBox="0 0 89 34" fill="#fff" stroke="#1fc495" stroke-width="1"><path d="M1.500 16.500l15.500-15.500h68q2.500 0 2.500 2.500v26q0 2.500-2.500 2.500h-68z" stroke-linejoin="round"/></svg>
<div class="abs" style="left:653px;top:664px;width:64px;font-size:14px;line-height:32px;color:#00b886;text-align:center">上一页</div>
<div class="abs" style="left:736px;top:664px;width:40px;font-size:15px;line-height:32px;color:#333;text-align:center">1/5</div>
<svg class="abs" style="left:790px;top:663px" width="89" height="34" viewBox="0 0 89 34" fill="#fff" stroke="#1fc495" stroke-width="1"><path d="M87.500 16.500l-15.500-15.500h-68q-2.500 0-2.500 2.500v26q0 2.500 2.500 2.500h68z" stroke-linejoin="round"/></svg>
<div class="abs" style="left:795px;top:664px;width:64px;font-size:14px;line-height:32px;color:#00b886;text-align:center">下一页</div>
</div>
</body>
</html>
